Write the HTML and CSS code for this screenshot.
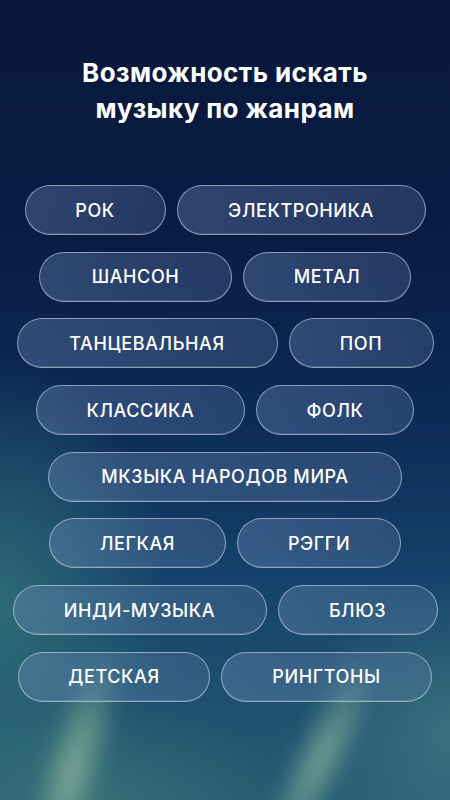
FILE: index.html
```html
<!DOCTYPE html>
<html lang="ru">
<head>
    <meta charset="UTF-8">
    <meta name="viewport" content="width=device-width, initial-scale=1.0">
    <title>Жанры</title>
    <link rel="stylesheet" href="styles.css">
</head>
<body>
    <div class="screen">
        <div class="streak streak-left"></div>
        <div class="streak streak-right"></div>
        <h1 class="title">Возможность искать<br>музыку по жанрам</h1>
        <div class="genres">
            <div class="row">
                <span class="pill w141">РОК</span>
                <span class="pill w249">ЭЛЕКТРОНИКА</span>
            </div>
            <div class="row">
                <span class="pill w193">ШАНСОН</span>
                <span class="pill w168">МЕТАЛ</span>
            </div>
            <div class="row">
                <span class="pill w261">ТАНЦЕВАЛЬНАЯ</span>
                <span class="pill w145">ПОП</span>
            </div>
            <div class="row">
                <span class="pill w209">КЛАССИКА</span>
                <span class="pill w158">ФОЛК</span>
            </div>
            <div class="row">
                <span class="pill w354">МКЗЫКА НАРОДОВ МИРА</span>
            </div>
            <div class="row">
                <span class="pill w177">ЛЕГКАЯ</span>
                <span class="pill w164">РЭГГИ</span>
            </div>
            <div class="row">
                <span class="pill w254">ИНДИ-МУЗЫКА</span>
                <span class="pill w160">БЛЮЗ</span>
            </div>
            <div class="row">
                <span class="pill w192">ДЕТСКАЯ</span>
                <span class="pill w211">РИНГТОНЫ</span>
            </div>
        </div>
    </div>
</body>
</html>
```

FILE: styles.css
```css
html, body {
    margin: 0;
    padding: 0;
}
body {
    font-family: Inter, "Noto Sans", sans-serif;
    color: #fff;
    background: #0a1a3e;
}
.screen {
    position: relative;
    width: 450px;
    height: 800px;
    overflow: hidden;
    box-sizing: border-box;
    padding-top: 55px;
    background:
        radial-gradient(ellipse 220px 330px at 0px 600px, rgba(60, 130, 125, 0.6), transparent 75%),
        radial-gradient(ellipse 200px 200px at 450px 730px, rgba(80, 140, 140, 0.5), transparent 75%),
        radial-gradient(ellipse 260px 140px at 90px 800px, rgba(70, 130, 120, 0.5), transparent 75%),
        linear-gradient(180deg, #08183c 0%, #0a1c44 30%, #0d2a57 52%, #15426a 72%, #245c72 100%);
}
/* aurora streaks at the bottom */
.streak {
    position: absolute;
    border-radius: 50%;
    filter: blur(10px);
    pointer-events: none;
}
.streak-left {
    left: 45px;
    top: 650px;
    width: 55px;
    height: 240px;
    transform: rotate(16deg);
    background: radial-gradient(ellipse at center, rgba(150, 185, 160, 0.85), rgba(110, 160, 140, 0.35) 55%, transparent 75%);
}
.streak-right {
    left: 295px;
    top: 645px;
    width: 50px;
    height: 230px;
    transform: rotate(26deg);
    background: radial-gradient(ellipse at center, rgba(150, 185, 165, 0.8), rgba(110, 160, 140, 0.32) 55%, transparent 75%);
}
.title {
    position: relative;
    margin: 0;
    text-align: center;
    font-size: 26px;
    line-height: 36px;
    font-weight: 700;
    letter-spacing: 0.4px;
}
.genres {
    position: relative;
    margin-top: 58px;
    display: flex;
    flex-direction: column;
    gap: 16.7px;
}
.row {
    display: flex;
    justify-content: center;
    gap: 11px;
}
.pill {
    box-sizing: border-box;
    height: 50px;
    display: flex;
    align-items: center;
    justify-content: center;
    border-radius: 25px;
    border: 1.5px solid rgba(220, 230, 245, 0.55);
    background: linear-gradient(110deg, rgba(120, 150, 195, 0.34), rgba(110, 135, 180, 0.26));
    box-shadow: inset 0 -1px 0 rgba(255, 255, 255, 0.12);
    font-size: 18px;
    font-weight: 500;
    letter-spacing: 0.6px;
}
.w141 { width: 141px; }
.w145 { width: 145px; }
.w158 { width: 158px; }
.w160 { width: 160px; }
.w164 { width: 164px; }
.w168 { width: 168px; }
.w177 { width: 177px; }
.w192 { width: 192px; }
.w193 { width: 193px; }
.w209 { width: 209px; }
.w211 { width: 211px; }
.w249 { width: 249px; }
.w254 { width: 254px; }
.w261 { width: 261px; }
.w354 { width: 354px; }
```
